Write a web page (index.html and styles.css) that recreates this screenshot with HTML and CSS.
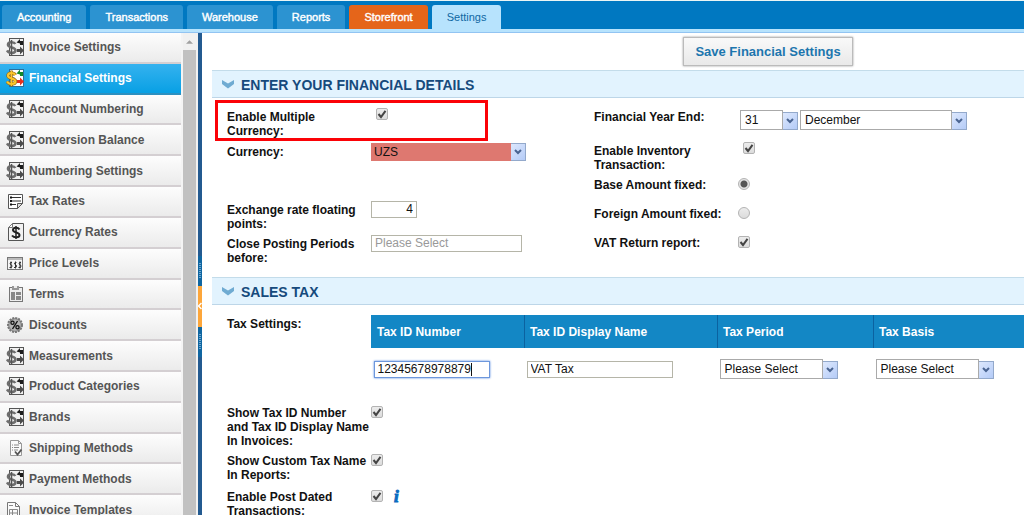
FILE: index.html
```html
<!DOCTYPE html>
<html lang="en">
<head>
<meta charset="utf-8">
<title>Financial Settings</title>
<link rel="stylesheet" href="styles.css">
</head>
<body>
<svg class="sprite" aria-hidden="true">
  <symbol id="i-money" viewBox="0 0 18 18">
    <rect x="3.500" y=".5" width="14" height="17" fill="#f0f0f0" stroke="#555"/>
    <path d="M10.500 4.500L14 1v2h3v4h-3V5.500z" fill="#1c1c1c"/>
    <path d="M18 12.500l-4-4v2.500h-3v3h3v2.500z" fill="#4a4a4a"/>
    <path d="M9.300 6C8 3.500 2 3.500 2 6.700S9.500 9 9.500 12.300 3 16 1 12.500" fill="none" stroke="#6e6e6e" stroke-width="2.600"/>
    <path d="M5.500 2v15.500" stroke="#555" stroke-width="1.500"/>
  </symbol>
  <symbol id="i-money-color" viewBox="0 0 18 18">
    <rect x="3.500" y=".5" width="14" height="17" fill="#fff" stroke="#2c6f9c"/>
    <path d="M10.500 4.500L14 .5v2.500h3v4h-3V5.500z" fill="#128a2c"/>
    <path d="M18 12.500l-4-4v2.500h-3v3h3v2.500z" fill="#e5301c"/>
    <path d="M9.300 6C8 3.500 2 3.500 2 6.700S9.500 9 9.500 12.300 3 16 1 12.500" fill="none" stroke="#8a6512" stroke-width="3.400"/>
    <path d="M5.500 1.500v16" stroke="#8a6512" stroke-width="2.400"/>
    <path d="M9.300 6C8 3.500 2 3.500 2 6.700S9.500 9 9.500 12.300 3 16 1 12.500" fill="none" stroke="#fbc52c" stroke-width="2.200"/>
    <path d="M5.500 2v15" stroke="#fbc52c"/>
  </symbol>
  <symbol id="i-note" viewBox="0 0 18 18">
    <path d="M2.500 2.500h14v9l-5 5h-9z" fill="#fff" stroke="#555"/>
    <path d="M16.500 11.500h-5v5z" fill="#ddd" stroke="#555"/>
    <path d="M4 5.500h2M4 9h2M4 12.500h2" stroke="#111" stroke-width="2"/>
    <path d="M6 5.500h9M6 9h9M6 12.500h4" stroke="#333"/>
  </symbol>
  <symbol id="i-currency" viewBox="0 0 18 18">
    <path d="M6.500 .5h11v17h-15v-13z" fill="#f2f2f2" stroke="#555"/>
    <path d="M2.500 4.500h4v-4z" fill="#fff" stroke="#777"/>
    <path d="M13.500 6.500C12 4 7 4 7 7s6.500 2 6.500 5-5.500 3-7.500 .5" fill="none" stroke="#222" stroke-width="2"/>
    <path d="M10 3v13" stroke="#222" stroke-width="1.500"/>
  </symbol>
  <symbol id="i-price" viewBox="0 0 18 18">
    <rect x="1.500" y="3.500" width="15" height="12" fill="#f6f6f6" stroke="#777"/>
    <path d="M2 5h14" stroke="#bbb" stroke-width="2"/>
    <g fill="none" stroke="#333"><path d="M6 8.500H4.500L4 10l1.500 1 .5 1-.5 1.500H3.500M5 7.500v7"/><path d="M10.500 8.500H9L8.500 10l1.500 1 .5 1-.5 1.500H8M9.500 7.500v7"/><path d="M15 8.500h-1.500L13 10l1.500 1 .5 1-.5 1.500h-2M14 7.500v7"/></g>
  </symbol>
  <symbol id="i-terms" viewBox="0 0 18 18">
    <rect x="3.500" y="2.500" width="13" height="14" fill="#eee" stroke="#777"/>
    <path d="M6 1h7v4H6z" fill="#999"/><path d="M8 1h3v2H8z" fill="#eee"/>
    <path d="M5 7h4v8H5zM10 7h5v3h-5zM10 11h5v4h-5z" fill="#888"/>
  </symbol>
  <symbol id="i-discount" viewBox="0 0 18 18">
    <circle cx="9" cy="9" r="7" fill="#999" stroke="#777" stroke-width="2" stroke-dasharray="2 1"/>
    <circle cx="9" cy="9" r="5.500" fill="#b5b5b5"/>
    <circle cx="6.500" cy="6.800" r="1.600" fill="none" stroke="#111" stroke-width="1.300"/><circle cx="11.500" cy="11.200" r="1.600" fill="none" stroke="#111" stroke-width="1.300"/>
    <path d="M11.500 5l-5 8" stroke="#111" stroke-width="1.400"/>
  </symbol>
  <symbol id="i-shipping" viewBox="0 0 18 18">
    <path d="M4.500 1.500h8l3 3v12h-11z" fill="#fafafa" stroke="#999"/>
    <path d="M12.500 1.500v3h3" fill="none" stroke="#999"/>
    <path d="M6 6h1M6 8.500h1M6 11h1M8 6h5M8 8.500h5M8 11h4" stroke="#888"/>
    <path d="M9 12.500l2.500 3 4-5" fill="none" stroke="#555" stroke-width="1.800"/>
  </symbol>
  <symbol id="i-template" viewBox="0 0 18 18">
    <path d="M1.500 1.500h8l4 4v12h-12z" fill="#fafafa" stroke="#777"/>
    <path d="M9.500 1.500v4h4" fill="none" stroke="#777"/>
    <path d="M3.500 8.500h8v7h-8zM3.500 12h8M6.500 8.500v7M3 4.500h4" fill="none" stroke="#888"/>
  </symbol>
  <symbol id="i-chevron" viewBox="0 0 12 9">
    <path d="M0 0l6 3.500L12 0v4L6 8.500 0 4z" fill="#6fabd2"/>
  </symbol>
  <symbol id="i-drop" viewBox="0 0 8 6">
    <path d="M1 1l3 3 3-3" fill="none" stroke="#4a6491" stroke-width="2"/>
  </symbol>
</svg>

<header class="topbar">
  <nav class="tabs">
    <a class="tab" href="#">Accounting</a>
    <a class="tab" href="#">Transactions</a>
    <a class="tab" href="#">Warehouse</a>
    <a class="tab" href="#">Reports</a>
    <a class="tab tab-store" href="#">Storefront</a>
    <a class="tab tab-current" href="#">Settings</a>
  </nav>
</header>

<div class="workspace">
  <aside class="sidebar">
    <nav class="menu">
      <a class="item" href="#"><svg class="icon"><use href="#i-money"/></svg>Invoice Settings</a>
      <a class="item item-active" href="#"><svg class="icon"><use href="#i-money-color"/></svg>Financial Settings</a>
      <a class="item" href="#"><svg class="icon"><use href="#i-money"/></svg>Account Numbering</a>
      <a class="item" href="#"><svg class="icon"><use href="#i-money"/></svg>Conversion Balance</a>
      <a class="item" href="#"><svg class="icon"><use href="#i-money"/></svg>Numbering Settings</a>
      <a class="item" href="#"><svg class="icon"><use href="#i-note"/></svg>Tax Rates</a>
      <a class="item" href="#"><svg class="icon"><use href="#i-currency"/></svg>Currency Rates</a>
      <a class="item" href="#"><svg class="icon"><use href="#i-price"/></svg>Price Levels</a>
      <a class="item" href="#"><svg class="icon"><use href="#i-terms"/></svg>Terms</a>
      <a class="item" href="#"><svg class="icon"><use href="#i-discount"/></svg>Discounts</a>
      <a class="item" href="#"><svg class="icon"><use href="#i-money"/></svg>Measurements</a>
      <a class="item" href="#"><svg class="icon"><use href="#i-money"/></svg>Product Categories</a>
      <a class="item" href="#"><svg class="icon"><use href="#i-money"/></svg>Brands</a>
      <a class="item" href="#"><svg class="icon"><use href="#i-shipping"/></svg>Shipping Methods</a>
      <a class="item" href="#"><svg class="icon"><use href="#i-money"/></svg>Payment Methods</a>
      <a class="item" href="#"><svg class="icon"><use href="#i-template"/></svg>Invoice Templates</a>
    </nav>
    <div class="scrollbar">
      <svg class="scroll-up" viewBox="0 0 8 4"><path d="M0 4l4-4 4 4z" fill="#a0a0a0"/></svg>
      <div class="scroll-thumb"></div>
    </div>
  </aside>

  <div class="splitter">
    <div class="grip"></div>
    <button class="collapse" aria-label="Collapse menu"><svg viewBox="0 0 4 8"><path d="M3.500 1L.5 4l3 3" fill="none" stroke="#fff" stroke-width="1.500"/></svg></button>
    <div class="grip"></div>
  </div>

  <main class="content">
    <div class="actions"><button class="save">Save Financial Settings</button></div>

    <section>
      <h2 class="heading"><svg class="chevron"><use href="#i-chevron"/></svg>ENTER YOUR FINANCIAL DETAILS</h2>
      <div class="details">
        <div class="column">
          <div class="field field-multi">
            <label for="multi">Enable Multiple Currency:</label>
            <div class="control control-inset"><input class="check" type="checkbox" id="multi" checked></div>
            <div class="highlight"></div>
          </div>
          <div class="field field-currency">
            <label for="currency">Currency:</label>
            <div class="control combo combo-alert"><select id="currency"><option>UZS</option></select><span class="trigger"><svg><use href="#i-drop"/></svg></span></div>
          </div>
          <div class="field field-rate">
            <label for="rate">Exchange rate floating points:</label>
            <div class="control"><input class="text text-number" type="text" id="rate" value="4"></div>
          </div>
          <div class="field field-close">
            <label for="close">Close Posting Periods before:</label>
            <div class="control"><input class="text text-period" type="text" id="close" placeholder="Please Select"></div>
          </div>
        </div>
        <div class="column">
          <div class="field field-year">
            <label for="day">Financial Year End:</label>
            <div class="control control-pair">
              <div class="combo combo-day"><select id="day"><option>31</option></select><span class="trigger"><svg><use href="#i-drop"/></svg></span></div>
              <div class="combo combo-month"><select aria-label="Month"><option>December</option></select><span class="trigger"><svg><use href="#i-drop"/></svg></span></div>
            </div>
          </div>
          <div class="field field-year">
            <label for="inventory">Enable Inventory Transaction:</label>
            <div class="control control-inset"><input class="check" type="checkbox" id="inventory" checked></div>
          </div>
          <div class="field field-short">
            <label for="base">Base Amount fixed:</label>
            <div class="control control-low"><input class="radio" type="radio" name="fixed" id="base" checked></div>
          </div>
          <div class="field field-short">
            <label for="foreign">Foreign Amount fixed:</label>
            <div class="control control-low"><input class="radio" type="radio" name="fixed" id="foreign"></div>
          </div>
          <div class="field field-short">
            <label for="vat">VAT Return report:</label>
            <div class="control control-low"><input class="check" type="checkbox" id="vat" checked></div>
          </div>
        </div>
      </div>
    </section>

    <section>
      <h2 class="heading"><svg class="chevron"><use href="#i-chevron"/></svg>SALES TAX</h2>
      <div class="tax">
        <div class="field field-table">
          <span class="label" id="tax-label">Tax Settings:</span>
          <table class="grid" aria-labelledby="tax-label">
            <thead>
              <tr><th class="col-id">Tax ID Number</th><th class="col-name">Tax ID Display Name</th><th class="col-period">Tax Period</th><th>Tax Basis</th></tr>
            </thead>
            <tbody>
              <tr>
                <td><input class="text text-id" type="text" aria-label="Tax ID Number" value="12345678978879"></td>
                <td><input class="text text-name" type="text" aria-label="Tax ID Display Name" value="VAT Tax"></td>
                <td><div class="combo combo-tax"><select aria-label="Tax Period"><option>Please Select</option></select><span class="trigger"><svg><use href="#i-drop"/></svg></span></div></td>
                <td><div class="combo combo-tax"><select aria-label="Tax Basis"><option>Please Select</option></select><span class="trigger"><svg><use href="#i-drop"/></svg></span></div></td>
              </tr>
            </tbody>
          </table>
        </div>
        <div class="field field-tall">
          <label for="show-id">Show Tax ID Number<br>and Tax ID Display Name In Invoices:</label>
          <div class="control control-low"><input class="check" type="checkbox" id="show-id" checked></div>
        </div>
        <div class="field">
          <label for="show-custom">Show Custom Tax Name In Reports:</label>
          <div class="control control-low"><input class="check" type="checkbox" id="show-custom" checked></div>
        </div>
        <div class="field">
          <label for="post-dated">Enable Post Dated Transactions:</label>
          <div class="control control-low"><input class="check" type="checkbox" id="post-dated" checked><span class="info">i</span></div>
        </div>
      </div>
    </section>
  </main>
</div>
</body>
</html>
```
FILE: styles.css
```css
* { box-sizing: border-box; }

body {
  margin: 0;
  height: 100vh;
  display: flex;
  flex-direction: column;
  overflow: hidden;
  background: #fff;
  color: #111;
  font: 12px/14px "Liberation Sans", Arial, sans-serif;
}

.sprite { display: none; }
input, select, button { font: inherit; margin: 0; }

/* Top tabs */
.topbar {
  flex: none;
  background: #0078c1;
  border-top: 1px solid #eaf5f5;
  border-bottom: 1px solid #92c4f2;
  padding-top: 4px;
}
.tabs {
  display: flex;
  gap: 4px;
  padding-left: 2px;
  border-bottom: 3px solid #b7e3fd;
}
.tab {
  padding: 0 15px;
  font-size: 11px;
  line-height: 24px;
  color: #fff;
  text-decoration: none;
  background: #2c93d1;
  border-radius: 3px 3px 0 0;
  -webkit-text-stroke: 0.4px #fff;
}
.tab-store { background: #e5651a; }
.tab-current { background: #b7e3fd; color: #0f68a3; -webkit-text-stroke: 0; }

.workspace { flex: 1; min-height: 0; display: flex; }

/* Side menu */
.sidebar { flex: none; width: 198px; display: flex; gap: 2px; overflow: hidden; background: #f4f4f4; }
.menu {
  flex: 1;
  display: grid;
  grid-auto-rows: 1fr;
  min-height: 493px;
  align-self: flex-start;
}
.item {
  display: flex;
  align-items: center;
  gap: 5px;
  padding: 0 6px;
  color: #555;
  font-weight: bold;
  text-decoration: none;
  background: linear-gradient(#fdfdfd, #ebebeb);
  border-bottom: 2px solid #d4cfd2;
}
.item-active {
  color: #fff;
  background: linear-gradient(#35b2ef, #08a0e4);
  border-bottom-color: #2d90c0;
}
.icon { width: 18px; height: 18px; flex: none; }
.scrollbar { width: 15px; display: flex; flex-direction: column; background: #f1f1f1; padding-right: 2px; }
.scroll-up { width: 7px; height: 4px; margin: 7px 3px 6px; flex: none; }
.scroll-thumb { flex: 1; background: #c1c1c1; }

/* Collapsible divider */
.splitter {
  flex: none;
  width: 4px;
  display: flex;
  flex-direction: column;
  justify-content: center;
  padding-top: 64px;
  background: #235a90;
}
.grip {
  height: 30px;
  background: repeating-linear-gradient(#6fa9d2 0 1px, #0f66a1 1px 2px) center / 2px 16px no-repeat #0f66a1;
}
.collapse {
  height: 41px;
  padding: 0;
  border: 0;
  display: flex;
  align-items: center;
  background: #fda63a;
}
.collapse svg { width: 4px; height: 8px; }

/* Main area */
.content { flex: 1; min-width: 0; padding-left: 10px; overflow: hidden; }
.actions { height: 37px; padding: 4px 0 0 300px; display: flex; justify-content: center; align-items: flex-start; }
.save {
  height: 29px;
  padding: 0 11px;
  font-size: 13px;
  font-weight: bold;
  color: #1c76ae;
  background: linear-gradient(#f9f9f9, #e9e9e9);
  border: 1px solid #bbb;
  box-shadow: 0 0 2px #999;
}
.heading {
  display: flex;
  align-items: center;
  gap: 7px;
  height: 28px;
  margin: 0;
  padding: 1px 10px 0;
  color: #164a7c;
  font-size: 14px;
  font-weight: bold;
  background: #e2f3fe;
  border-top: 1px solid #c3dcea;
  border-bottom: 1px solid #bdd6e8;
}
.chevron { width: 12px; height: 9px; }

.details { display: grid; grid-template-columns: 367px 1fr; padding: 10px 0 0 15px; }
.field { display: grid; grid-template-columns: 144px 1fr; align-items: start; min-height: 36px; }
.field label, .label { padding: 2px 0 0; font-weight: bold; }
.column:first-child label { padding-right: 14px; }
.field-multi { position: relative; min-height: 35px; }
.field-currency { min-height: 58px; }
.field-rate { min-height: 34px; }
.field-close { min-height: 42px; }
.field-year { min-height: 34px; }
.field-short { min-height: 29px; }
.field-table { min-height: 89px; }
.field-tall { min-height: 48px; }
.control { display: flex; align-items: flex-start; }
.control-inset { padding-left: 5px; }
.control-low { padding-top: 2px; }
.control-pair { gap: 2px; padding: 2px 0 0 2px; }
.highlight { position: absolute; inset: -8px 106px 2px -12px; border: 3px solid #fb0207; pointer-events: none; }

/* Form controls */
.check, .radio {
  appearance: none;
  width: 12px;
  height: 12px;
  border: 1px solid #b3b3b3;
  border-radius: 2px;
  background: linear-gradient(#ececec, #dcdcdc);
}
.check:checked {
  background: url("data:image/svg+xml,%3Csvg xmlns='http://www.w3.org/2000/svg' viewBox='0 0 10 10'%3E%3Cpath d='M1.500 5l2.500 3L8.500 1.800' fill='none' stroke='%23444' stroke-width='2'/%3E%3C/svg%3E") center / 10px 10px no-repeat, linear-gradient(#ececec, #dcdcdc);
}
.radio { border-radius: 50%; }
.radio:checked { background: radial-gradient(circle, #555 0 3px, #e4e4e4 4px); }

.text {
  height: 17px;
  padding: 0 3px 2px;
  color: #111;
  background: #fff;
  border: 1px solid #b5b5a8;
  outline: 0;
}
.text::placeholder { color: #999; opacity: 1; }
.text-number { width: 46px; text-align: right; }
.text-period { width: 151px; }
.text-id {
  width: 116px;
  border-color: #6d97dc;
  box-shadow: 0 0 2px #4d84e0;
  background: linear-gradient(#111, #111) 96px 1px / 1px 13px no-repeat #fff;
}
.text-name { width: 146px; }

.combo { display: flex; align-items: flex-end; }
.combo select {
  appearance: none;
  height: 20px;
  padding: 0 4px;
  color: #111;
  background: #fff;
  border: 1px solid #aaa;
  border-radius: 0;
}
.trigger {
  display: flex;
  align-items: center;
  justify-content: center;
  width: 15px;
  height: 18px;
  background: linear-gradient(135deg, #dde8fd, #b4cbf7);
  border: 1px solid #93a9cb;
  border-left: 0;
}
.trigger svg { width: 8px; height: 6px; }
.combo-alert select { width: 140px; height: 18px; padding: 0 3px; background: #de7870; border: 0; }
.combo-day select { width: 43px; }
.combo-month select { width: 152px; }
.combo-tax select { width: 103px; }

/* Tax table */
.tax { padding: 10px 0 0 15px; }
.grid { width: 100%; border-collapse: collapse; table-layout: fixed; }
.grid th {
  height: 33px;
  padding: 0 5px;
  text-align: left;
  color: #fff;
  background: #1387c5;
  border-left: 1px solid #0b62a0;
}
.grid th:first-child { border-left-color: #1387c5; }
.grid td { padding: 11px 2px 0; vertical-align: top; }
.grid .text { display: block; margin-top: 2px; }
.col-id { width: 153px; }
.col-name { width: 193px; }
.col-period { width: 156px; }
.info {
  margin-left: 11px;
  color: #0b6cc0;
  font: italic bold 17px/14px "Liberation Serif", "Times New Roman", serif;
  -webkit-text-stroke: 1px #0b6cc0;
}
```
